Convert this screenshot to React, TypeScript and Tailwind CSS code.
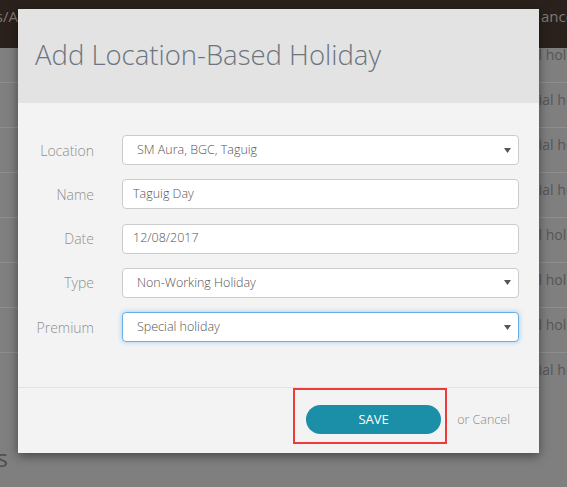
const rows = [
    'Legal holiday',
    'Special holiday',
    'Special holiday',
    'Special holiday',
    'Legal holiday',
    'Legal holiday',
    'Legal holiday',
    'Special holiday',
];

const fields = [
    { label: 'Location', value: 'SM Aura, BGC, Taguig', select: true },
    { label: 'Name', value: 'Taguig Day' },
    { label: 'Date', value: '12/08/2017' },
    { label: 'Type', value: 'Non-Working Holiday', select: true },
    { label: 'Premium', value: 'Special holiday', select: true, focus: true },
];

const Caret = () => (
    <svg width="7" height="5" viewBox="0 0 7 5" className="shrink-0">
        <polygon points="0,0 7,0 3.5,5" fill="#555" />
    </svg>
);

const App = () => {
    return (
        <div
            className="relative w-[567px] h-[487px] overflow-hidden bg-[#7f7f7f]"
            style={{ fontFamily: '"Open Sans", "Liberation Sans", sans-serif' }}
        >
            {/* page behind the backdrop */}
            <div className="relative z-10 h-12 bg-[#2a211c] flex justify-between pt-[6px] text-[15px] leading-5 text-[#7f7a75]">
                <div className="w-[18px] overflow-hidden flex justify-end whitespace-nowrap">
                    Holidays/A
                </div>
                <div className="w-[26px] whitespace-nowrap">ance</div>
            </div>
            <div className="-mt-[10px]">
                {rows.map((r, i) => (
                    <div
                        key={i}
                        className={`h-[45px] flex pt-[7px] text-[14px] leading-5 text-[#555] ${
                            i < rows.length - 1 ? 'border-b border-[#8e8e8e]' : ''
                        }`}
                    >
                        <div className="w-[508px] shrink-0" />
                        <div className="whitespace-nowrap">{r}</div>
                    </div>
                ))}
            </div>
            <div className="mt-[44px] w-[8px] overflow-hidden flex justify-end whitespace-nowrap text-[24px] leading-8 text-[#4d4d4d]">
                Holidays
            </div>

            {/* modal */}
            <div className="absolute z-20 left-[18px] top-[9px] w-[521px] h-[444px] bg-[#f3f3f3] flex flex-col shadow-[0_3px_10px_rgba(0,0,0,0.45)]">
                <div className="h-[94px] bg-[#e3e3e3] flex items-center px-[17px] pb-[2px]">
                    <h2 className="text-[27.5px] leading-none font-light text-[#6c7580] whitespace-nowrap">
                        Add Location-Based Holiday
                    </h2>
                </div>

                <div className="flex-1 pt-[32px] pr-[20px] flex flex-col gap-[14.3px]">
                    {fields.map((f) => (
                        <div key={f.label} className="flex items-center gap-[28px]">
                            <label className="w-[76px] text-right text-[14px] font-light text-[#8f8f8f] shrink-0">
                                {f.label}
                            </label>
                            <div
                                className={`w-[397px] h-[30px] rounded-[4px] bg-white border flex items-center text-[12.5px] font-light text-[#555] ${
                                    f.focus
                                        ? 'border-[#66afe9] shadow-[0_0_5px_rgba(102,175,233,0.6)]'
                                        : 'border-[#ccc]'
                                } ${f.select ? 'pl-[14px] pr-[7px] justify-between' : 'pl-[10px]'}`}
                            >
                                <span>{f.value}</span>
                                {f.select && <Caret />}
                            </div>
                        </div>
                    ))}
                </div>

                <div className="h-[66px] border-t border-[#e3e3e3] flex items-center justify-end pr-[29px] gap-[10px]">
                    <div className="self-start border-2 border-[#f03a3a] pl-[11px] pr-[4px] pt-[15px] pb-[8px]">
                        <button className="w-[135px] h-[29px] rounded-full bg-[#1c8fa8] text-white text-[13px]">
                            SAVE
                        </button>
                    </div>
                    <span className="text-[12.5px] font-light text-[#8a8a8a]">or Cancel</span>
                </div>
            </div>
        </div>
    );
};

export default App;
